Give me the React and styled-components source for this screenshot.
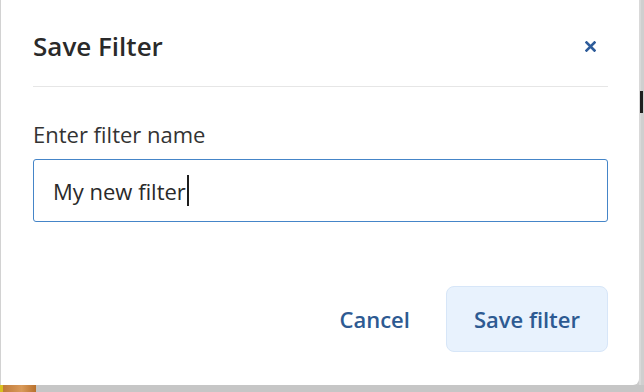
import React from 'react'
import styled, { createGlobalStyle } from 'styled-components'

const GlobalStyle = createGlobalStyle`
  html, body {
    margin: 0;
    padding: 0;
    background: #cbcbcb;
    font-family: 'Open Sans', 'Noto Sans', sans-serif;
  }
`

const Page = styled.div`
  width: 644px;
  height: 392px;
  overflow: hidden;
  display: grid;
  grid-template-columns: 639px 1fr;
  grid-template-rows: 385px 1fr;
  background: #cbcbcb;
`

const Dialog = styled.div`
  background: #fff;
  border-left: 1px solid #d2d2d2;
  border-radius: 0 0 6px 0;
  padding: 0 31px 0 32px;
  display: flex;
  flex-direction: column;
`

const Header = styled.div`
  display: flex;
  align-items: center;
  justify-content: space-between;
  padding: 30px 0 23px;
  border-bottom: 1px solid #e6e6e6;
`

const Title = styled.h2`
  margin: 0;
  font-size: 26px;
  line-height: 33px;
  font-weight: 600;
  color: #2a2a2a;
`

const CloseButton = styled.button`
  border: 0;
  background: none;
  padding: 0;
  margin-right: 12px;
  width: 12px;
  height: 12px;
  display: flex;
  align-items: center;
  justify-content: center;
  cursor: pointer;
`

const Body = styled.div`
  padding-top: 32px;
  display: flex;
  flex-direction: column;
  gap: 9px;
`

const Label = styled.label`
  font-size: 22px;
  line-height: 31px;
  color: #333;
`

const Field = styled.div`
  height: 61px;
  border: 1px solid #4585c8;
  border-radius: 3px;
  padding: 0 19px;
  display: flex;
  align-items: center;
  font-size: 22px;
  color: #2a2a2a;
`

const Caret = styled.span`
  display: inline-block;
  width: 2px;
  height: 31px;
  background: #1e1e1e;
  margin-left: 1px;
`

const Footer = styled.div`
  margin-top: auto;
  padding-bottom: 33px;
  display: flex;
  justify-content: flex-end;
  align-items: center;
  gap: 11px;
`

const ActionButton = styled.button`
  height: 66px;
  padding: 0 ${(p) => (p.$primary ? '27px' : '24px')};
  border-radius: 8px;
  border: 1px solid ${(p) => (p.$primary ? '#d7e6f8' : 'transparent')};
  background: ${(p) => (p.$primary ? '#e8f2fd' : 'transparent')};
  color: #2d5a92;
  font-family: 'Open Sans', 'Noto Sans', sans-serif;
  font-size: 22px;
  font-weight: 600;
  cursor: pointer;
`

const SideStrip = styled.div`
  background: linear-gradient(90deg, #d9d9d9 0 2px, #cfcfcf 2px);
  padding-top: 91px;
  display: flex;
  justify-content: flex-end;
`

const ScrollThumb = styled.div`
  width: 3px;
  height: 22px;
  background: #1f1f1f;
  margin-right: 1px;
`

const BottomStrip = styled.div`
  grid-column: 1 / 3;
  background: #c6c6c6;
  display: flex;
`

const Thumbnail = styled.div`
  width: 36px;
  background: linear-gradient(90deg, #d8c020 0 3px, #c07a3a 3px, #d99a5a 60%, #b8702c);
`

export default function App() {
  return (
    <>
      <GlobalStyle />
      <Page>
        <Dialog>
          <Header>
            <Title>Save Filter</Title>
            <CloseButton aria-label="Close">
              <svg width="11" height="11" viewBox="0 0 11 11">
                <path
                  d="M1.5 1.5 L9.5 9.5 M9.5 1.5 L1.5 9.5"
                  stroke="#2e5c9a"
                  strokeWidth="2.6"
                  strokeLinecap="square"
                />
              </svg>
            </CloseButton>
          </Header>
          <Body>
            <Label>Enter filter name</Label>
            <Field>
              <span>My new filter</span>
              <Caret />
            </Field>
          </Body>
          <Footer>
            <ActionButton>Cancel</ActionButton>
            <ActionButton $primary>Save filter</ActionButton>
          </Footer>
        </Dialog>
        <SideStrip>
          <ScrollThumb />
        </SideStrip>
        <BottomStrip>
          <Thumbnail />
        </BottomStrip>
      </Page>
    </>
  )
}
